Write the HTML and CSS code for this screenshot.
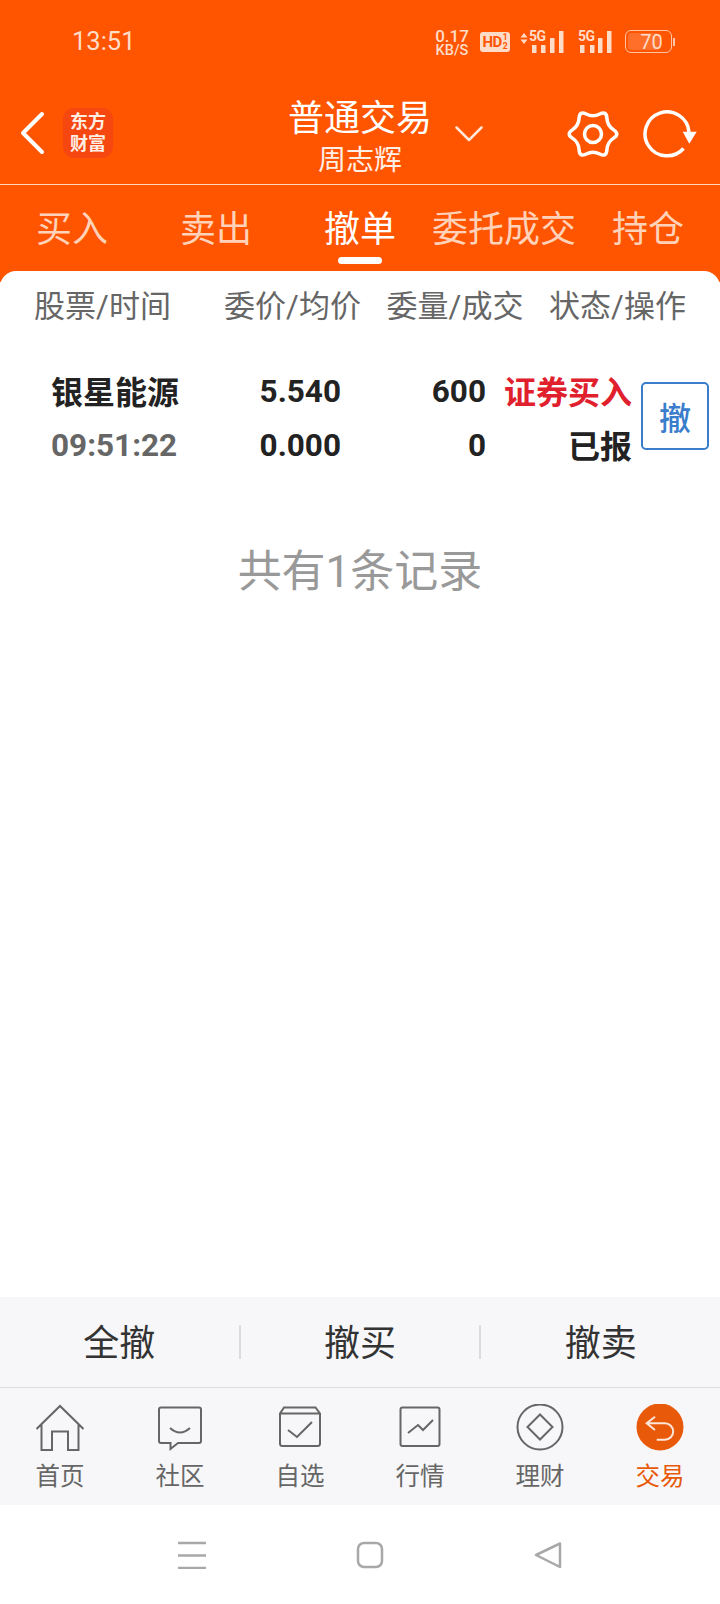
FILE: index.html
```html
<!DOCTYPE html>
<html lang="en">
<head>
    <meta charset="UTF-8">
    <meta name="viewport" content="width=device-width, initial-scale=1.0">
    <title>普通交易</title>
    <link rel="stylesheet" href="styles.css">
</head>
<body>
    <div class="top">
        <div class="status">
            <span class="clock">13:51</span>
            <div class="status-icons">
                <div class="speed"><span class="speed-num">0.17</span><span class="speed-unit">KB/S</span></div>
                <div class="hd"><span class="hd-text">HD</span><span class="hd-sim"><i>1</i><i>2</i></span></div>
                <svg class="sig-a" width="46" height="31" viewBox="0 -5 46 31">
                    <path d="M1.5 7.5L5 3L8.5 7.5ZM1.5 9.5L5 14L8.5 9.5Z" class="sig-fill"/>
                    <text x="10" y="11" class="sig-text">5G</text>
                    <rect x="13" y="15" width="4.5" height="8" class="sig-fill"/>
                    <rect x="22" y="15" width="4.5" height="8" class="sig-fill"/>
                    <rect x="31" y="8" width="4.5" height="15" class="sig-fill"/>
                    <rect x="40" y="1" width="4.5" height="22" class="sig-fill"/>
                </svg>
                <svg class="sig-b" width="36" height="31" viewBox="0 -5 36 31">
                    <text x="0" y="11" class="sig-text">5G</text>
                    <rect x="2" y="15" width="4.5" height="8" class="sig-fill"/>
                    <rect x="12" y="15" width="4.5" height="8" class="sig-fill"/>
                    <rect x="20" y="8" width="4.5" height="15" class="sig-fill"/>
                    <rect x="29" y="1" width="4.5" height="22" class="sig-fill"/>
                </svg>
                <div class="battery"><div class="battery-body"><span class="battery-level"></span><span class="battery-num">70</span></div><span class="battery-nub"></span></div>
            </div>
        </div>

        <div class="titlebar">
            <div class="title-left">
                <svg width="26" height="44" viewBox="0 0 26 44" class="back">
                    <path d="M23 3L4 22L23 41" />
                </svg>
                <div class="logo"><span>东方</span><span>财富</span></div>
            </div>
            <div class="title-mid">
                <div class="title-main">普通交易</div>
                <div class="title-sub">周志辉</div>
            </div>
            <div class="title-right">
                <svg width="28" height="16" viewBox="0 0 28 16" class="chev">
                    <path d="M1.5 1.5L14 14L26.5 1.5" />
                </svg>
                <svg width="56" height="56" viewBox="-28 -28 56 56" class="gear">
                    <path d="M20.64 -4.125Q27 0 20.64 4.125Q14.29 8.25 13.9 15.82Q13.5 23.38 6.75 19.94Q0 16.5 -6.75 19.94Q-13.5 23.38 -13.9 15.82Q-14.29 8.25 -20.64 4.125Q-27 0 -20.64 -4.125Q-14.29 -8.25 -13.9 -15.82Q-13.5 -23.38 -6.75 -19.94Q0 -16.5 6.75 -19.94Q13.5 -23.38 13.9 -15.82Q14.29 -8.25 20.64 -4.125Z" />
                    <circle r="8.5" />
                </svg>
                <svg width="56" height="50" viewBox="0 0 56 50" class="refresh">
                    <path d="M46 23A22 22 0 1 0 40.5 39.5" />
                    <path d="M39.7 22.7H53.7L46.3 34.7Z" class="refresh-head" />
                </svg>
            </div>
        </div>

        <div class="tabs">
            <div class="tab">买入</div>
            <div class="tab">卖出</div>
            <div class="tab active">撤单</div>
            <div class="tab">委托成交</div>
            <div class="tab">持仓</div>
        </div>
    </div>

    <div class="sheet">
        <div class="cols">
            <span>股票/时间</span>
            <span>委价/均价</span>
            <span>委量/成交</span>
            <span>状态/操作</span>
        </div>
        <div class="order">
            <div class="order-grid">
                <span class="name">银星能源</span>
                <span class="num">5.540</span>
                <span class="num">600</span>
                <span class="cjk kind">证券买入</span>
                <span class="time">09:51:22</span>
                <span class="num">0.000</span>
                <span class="num">0</span>
                <span class="cjk">已报</span>
            </div>
            <div class="cancel">撤</div>
        </div>
        <div class="count">共有1条记录</div>
    </div>

    <div class="actions">
        <div class="action">全撤</div>
        <div class="action">撤买</div>
        <div class="action">撤卖</div>
    </div>

    <div class="bottom-tabs">
        <div class="btab">
            <svg width="48" height="48" viewBox="0 0 48 48"><path d="M.5 25L24 2L47.5 25M5.5 20.5V46H16V27.5H32V46H42.5V20.5"/></svg>
            <span>首页</span>
        </div>
        <div class="btab">
            <svg width="48" height="48" viewBox="0 0 48 48"><path d="M5 3.5H43Q45 3.5 45 5.5V37Q45 39 43 39H22L14.5 45V39H5Q3 39 3 37V5.5Q3 3.5 5 3.5Z"/><path d="M14 24Q24 33 34 24"/></svg>
            <span>社区</span>
        </div>
        <div class="btab">
            <svg width="48" height="48" viewBox="0 0 48 48"><path d="M8 3.5H39.5L44 9.5V39.5Q44 42 41.5 42H6.5Q4 42 4 39.5V9.5ZM4 9.5H44"/><path d="M12 26L21 33L36 18"/></svg>
            <span>自选</span>
        </div>
        <div class="btab">
            <svg width="48" height="48" viewBox="0 0 48 48"><rect x="4.5" y="3.5" width="39" height="38.5" rx="2"/><path d="M12 29L22 21L27 26L37 16"/></svg>
            <span>行情</span>
        </div>
        <div class="btab">
            <svg width="48" height="48" viewBox="0 0 48 48"><circle cx="24" cy="23" r="22.5"/><path d="M24 10.5L36.5 23L24 35.5L11.5 23Z"/></svg>
            <span>理财</span>
        </div>
        <div class="btab active">
            <svg width="48" height="48" viewBox="0 0 48 48"><circle cx="24" cy="23" r="23.5" class="btab-disc"/><path d="M19 12.7L10.7 19.3L19 26M10.7 19.3H29A8.2 8.2 0 0 1 29 35.7H20.7" class="btab-arrow"/></svg>
            <span>交易</span>
        </div>
    </div>

    <div class="navbar">
        <svg width="28" height="28" viewBox="0 0 28 28"><path d="M0 2H28M0 14.5H28M0 27H28"/></svg>
        <svg width="28" height="28" viewBox="0 0 28 28"><rect x="2" y="2" width="24" height="24" rx="6"/></svg>
        <svg width="28" height="28" viewBox="0 0 28 28"><path d="M2 14L26 2.5V26Z"/></svg>
    </div>
</body>
</html>
```

FILE: styles.css
```css
* {
    box-sizing: border-box;
}
body {
    margin: 0;
    width: 720px;
    height: 1604px;
    display: flex;
    flex-direction: column;
    background-color: #fff;
    font-family: Roboto, "Noto Sans CJK SC", sans-serif;
    overflow: hidden;
}
svg {
    display: block;
    flex: none;
}

/* orange top area */
.top {
    background-color: #ff5500;
    color: #fff;
    height: 282px;
    flex: none;
}
.status {
    height: 84px;
    display: flex;
    align-items: flex-start;
    padding: 26px 0 0 72px;
    color: #ffdcc8;
}
.clock {
    font-family: Roboto, sans-serif;
    font-size: 25.5px;
    line-height: 30px;
}
.status-icons {
    margin-left: auto;
    display: flex;
    align-items: flex-start;
    padding-right: 45px;
}
.speed {
    width: 34px;
    margin-top: 3px;
    display: flex;
    flex-direction: column;
    align-items: center;
    font-weight: 500;
}
.speed-num {
    font-size: 17px;
    line-height: 15px;
}
.speed-unit {
    font-size: 14.5px;
    line-height: 13px;
}
.hd {
    width: 30px;
    height: 20px;
    margin: 6px 0 0 11px;
    background-color: #ffdcc8;
    border-radius: 3px;
    color: #ff5500;
    display: flex;
    align-items: center;
    justify-content: center;
    font-weight: 700;
}
.hd-text {
    font-size: 15px;
    letter-spacing: -0.5px;
}
.hd-sim {
    display: flex;
    flex-direction: column;
    font-size: 8.5px;
    line-height: 9px;
    margin-left: 1px;
}
.hd-sim i {
    font-style: normal;
}
.sig-a {
    margin: -1px 0 0 9px;
}
.sig-b {
    margin: -1px 0 0 13px;
}
.sig-fill {
    fill: #ffdcc8;
}
.sig-text {
    fill: #ffdcc8;
    font-size: 14px;
    font-weight: 700;
    letter-spacing: -0.5px;
}
.battery {
    display: flex;
    align-items: center;
    margin: 4px 0 0 11px;
}
.battery-body {
    position: relative;
    width: 47px;
    height: 23px;
    border: 1.5px solid #ffc4a3;
    border-radius: 6px;
    display: flex;
    align-items: center;
    justify-content: center;
    font-size: 20px;
    padding-left: 6px;
}
.battery-level {
    position: absolute;
    left: 2px;
    top: 2px;
    bottom: 2px;
    width: 68%;
    background-color: #ff6f2a;
    border-radius: 3px;
}
.battery-num {
    position: relative;
    font-weight: 400;
    color: #ffdcc8;
}
.battery-nub {
    width: 2px;
    height: 8px;
    margin-left: 1px;
    background-color: #ffc4a3;
}

.titlebar {
    height: 101px;
    display: grid;
    grid-template-columns: 270px 180px 270px;
    border-bottom: 1px solid #ffd8c0;
}
.title-left {
    display: flex;
    align-items: center;
    padding: 0 0 2px 19px;
    gap: 18px;
}
.back path,
.chev path {
    fill: none;
    stroke: #fff;
    stroke-width: 4;
    stroke-linecap: round;
    stroke-linejoin: round;
}
.chev path {
    stroke-width: 2.5;
    stroke: #ffe6d8;
}
.logo {
    width: 50px;
    height: 50px;
    background-color: #f5470f;
    border-radius: 11px;
    display: flex;
    flex-direction: column;
    align-items: center;
    justify-content: center;
    font-size: 18px;
    line-height: 22px;
    font-weight: 700;
    color: #ffeee4;
}
.title-mid {
    display: flex;
    flex-direction: column;
    align-items: center;
    padding-top: 9px;
}
.title-main {
    font-size: 36px;
    line-height: 52px;
}
.title-sub {
    font-size: 28px;
    line-height: 32px;
    color: #ffeee4;
}
.title-right {
    display: flex;
    align-items: center;
    padding: 0 21px 0 5px;
}
.gear {
    margin-left: auto;
}
.gear path,
.gear circle {
    fill: none;
    stroke: #fff;
    stroke-width: 3.5;
}
.refresh {
    margin-left: 22px;
}
.refresh path {
    fill: none;
    stroke: #fff;
    stroke-width: 3.5;
}
.refresh .refresh-head {
    fill: #fff;
    stroke: none;
}

.tabs {
    display: flex;
    height: 97px;
}
.tab {
    position: relative;
    flex: 1;
    text-align: center;
    font-size: 36px;
    line-height: 91px;
    color: #ffd2b9;
}
.tab.active {
    color: #fff;
}
.tab.active::after {
    content: "";
    position: absolute;
    left: 50%;
    top: 72px;
    width: 44px;
    height: 7px;
    margin-left: -22px;
    border-radius: 4px;
    background-color: #fff;
}

/* white sheet */
.sheet {
    flex: 1;
    margin-top: -11px;
    position: relative;
    background-color: #fff;
    border-radius: 16px 16px 0 0;
}
.cols {
    display: grid;
    grid-template-columns: 205px 175px 150px 175px;
    padding: 16px 0 0 0;
    font-size: 31px;
    line-height: 40px;
    color: #666;
    text-align: center;
    white-space: nowrap;
}
.order {
    display: flex;
    align-items: center;
    padding: 36px 0 0 51px;
}
.order-grid {
    display: grid;
    grid-template-columns: 201px 89px 145px 146px;
    grid-auto-rows: 54px;
    align-items: center;
    font-size: 31.5px;
    font-weight: 700;
    color: #222;
}
.num,
.cjk {
    text-align: right;
    white-space: nowrap;
}
.cjk,
.name {
    font-size: 32px;
}
.num,
.time {
    padding-top: 3px;
}
.kind {
    color: #e0202c;
}
.name {
    white-space: nowrap;
}
.time {
    color: #666;
}
.cancel {
    width: 68px;
    height: 68px;
    margin-left: 9px;
    margin-top: -3px;
    border: 2px solid #3a7dcc;
    border-radius: 5px;
    color: #3a7dcc;
    font-size: 32px;
    font-weight: 500;
    display: flex;
    align-items: center;
    justify-content: center;
}
.count {
    margin-top: 71px;
    text-align: center;
    font-size: 44px;
    line-height: 60px;
    color: #999;
}

/* bottom */
.actions {
    flex: none;
    height: 91px;
    display: flex;
    align-items: center;
    background-color: #f7f7f9;
    border-bottom: 1px solid #dddde0;
}
.action {
    flex: 1;
    height: 34px;
    line-height: 38px;
    text-align: center;
    font-size: 36px;
    color: #333;
    border-left: 2px solid #dcdcdc;
}
.action:first-child {
    border-left: none;
}
.bottom-tabs {
    flex: none;
    height: 117px;
    display: flex;
    background-color: #f7f7f9;
}
.btab {
    flex: 1;
    display: flex;
    flex-direction: column;
    align-items: center;
    padding-top: 16px;
    font-size: 24.5px;
    line-height: 34px;
    color: #666;
}
.btab svg {
    margin-bottom: 8px;
}
.btab svg path,
.btab svg circle,
.btab svg rect {
    fill: none;
    stroke: #666;
    stroke-width: 2;
}
.btab svg .btab-disc {
    fill: #e85a0a;
    stroke: none;
}
.btab svg .btab-arrow {
    stroke: #fde6d8;
}
.btab.active {
    color: #e85a0a;
}
.navbar {
    flex: none;
    height: 99px;
    display: flex;
    align-items: center;
    padding-left: 178px;
    gap: 150px;
}
.navbar svg path,
.navbar svg rect {
    fill: none;
    stroke: #a8a8a8;
    stroke-width: 2.5;
    stroke-linejoin: round;
}
```
